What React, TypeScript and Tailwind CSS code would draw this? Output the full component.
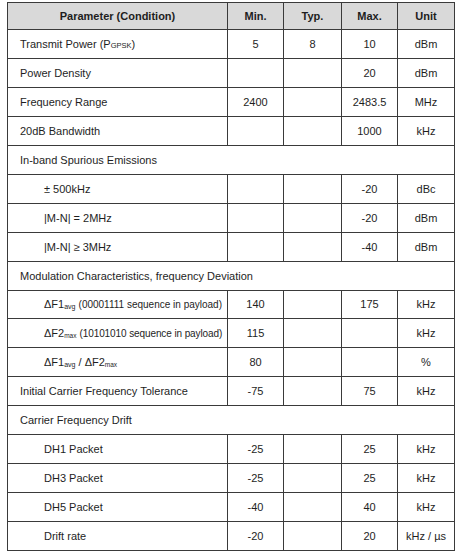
import React from "react";

type RowProps = {
  label: React.ReactNode;
  indent?: boolean;
  section?: boolean;
  vals?: [string, string, string, string];
  h?: string;
};

const Sub = ({ children }: { children: React.ReactNode }) => (
  <span className="text-[7px] relative top-[1px]">{children}</span>
);

function Row({ label, indent, section, vals, h = "h-[29px]" }: RowProps) {
  if (section) {
    return (
      <div className={`flex ${h}`}>
        <div className="flex-1 flex items-center pl-[12px] border-r border-b border-[#3a3a3a]">
          {label}
        </div>
      </div>
    );
  }
  const v = vals ?? ["", "", "", ""];
  const widths = ["w-[56px]", "w-[58px]", "w-[56px]", "w-[57px]"];
  return (
    <div className={`flex ${h}`}>
      <div
        className={`w-[220px] flex items-center border-r border-b border-[#3a3a3a] ${
          indent ? "pl-[36px]" : "pl-[12px]"
        }`}
      >
        {label}
      </div>
      {v.map((x, i) => (
        <div
          key={i}
          className={`${widths[i]} flex items-center justify-center border-r border-b border-[#3a3a3a]`}
        >
          {x}
        </div>
      ))}
    </div>
  );
}

export default function App() {
  return (
    <div
      className="bg-white w-[461px] h-[555px] pt-[2px] pl-[7px] text-[11px] text-[#1e1e1e]"
      style={{ fontFamily: '"Liberation Sans", Arial, sans-serif' }}
    >
      <div className="w-[448px] border-l border-t border-[#3a3a3a]">
        <div className="flex h-[27px] bg-[#d9d9d9] font-bold">
          <div className="w-[220px] flex items-center justify-center border-r border-b border-[#3a3a3a]">
            Parameter (Condition)
          </div>
          <div className="w-[56px] flex items-center justify-center border-r border-b border-[#3a3a3a]">
            Min.
          </div>
          <div className="w-[58px] flex items-center justify-center border-r border-b border-[#3a3a3a]">
            Typ.
          </div>
          <div className="w-[56px] flex items-center justify-center border-r border-b border-[#3a3a3a]">
            Max.
          </div>
          <div className="w-[57px] flex items-center justify-center border-r border-b border-[#3a3a3a]">
            Unit
          </div>
        </div>
        <Row
          label={
            <span>
              Transmit Power (P<span className="text-[7.5px]">GPSK</span>)
            </span>
          }
          vals={["5", "8", "10", "dBm"]}
        />
        <Row label="Power Density" vals={["", "", "20", "dBm"]} />
        <Row label="Frequency Range" vals={["2400", "", "2483.5", "MHz"]} />
        <Row label="20dB Bandwidth" vals={["", "", "1000", "kHz"]} />
        <Row label="In-band Spurious Emissions" section />
        <Row label="± 500kHz" indent vals={["", "", "-20", "dBc"]} />
        <Row label="|M-N| = 2MHz" indent vals={["", "", "-20", "dBm"]} />
        <Row label="|M-N| ≥ 3MHz" indent vals={["", "", "-40", "dBm"]} />
        <Row label="Modulation Characteristics, frequency Deviation" section />
        <Row
          h="h-[28px]"
          indent
          label={
            <span className="whitespace-nowrap">
              ΔF1<Sub>avg</Sub> <span className="text-[10px]">(00001111 sequence in payload)</span>
            </span>
          }
          vals={["140", "", "175", "kHz"]}
        />
        <Row
          indent
          label={
            <span className="whitespace-nowrap">
              ΔF2<span className="text-[6.5px] relative top-[1px]">max</span>{" "}
              <span className="text-[10px] tracking-[-0.1px]">(10101010 sequence in payload)</span>
            </span>
          }
          vals={["115", "", "", "kHz"]}
        />
        <Row
          indent
          label={
            <span className="whitespace-nowrap">
              ΔF1<Sub>avg</Sub> / ΔF2<span className="text-[6.5px] relative top-[1px]">max</span>
            </span>
          }
          vals={["80", "", "", "%"]}
        />
        <Row label="Initial Carrier Frequency Tolerance" vals={["-75", "", "75", "kHz"]} />
        <Row label="Carrier Frequency Drift" section />
        <Row label="DH1 Packet" indent vals={["-25", "", "25", "kHz"]} />
        <Row label="DH3 Packet" indent vals={["-25", "", "25", "kHz"]} />
        <Row label="DH5 Packet" indent vals={["-40", "", "40", "kHz"]} />
        <Row label="Drift rate" indent vals={["-20", "", "20", "kHz / µs"]} />
      </div>
    </div>
  );
}
